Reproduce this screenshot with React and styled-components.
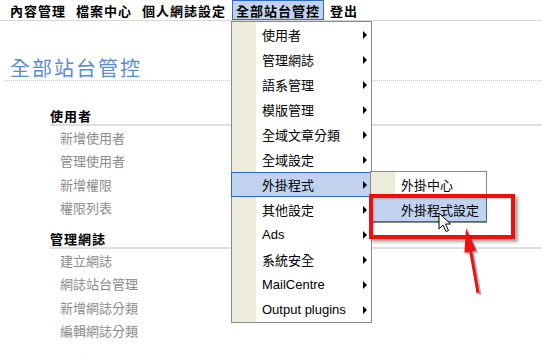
import React from "react";
import styled, { createGlobalStyle } from "styled-components";

const GlobalStyle = createGlobalStyle`
  html, body {
    margin: 0;
    padding: 0;
    background: #fff;
  }
  body {
    font-family: "Liberation Sans", "Noto Sans CJK TC", sans-serif;
    font-size: 13px;
    color: #000;
  }
`;

const Page = styled.div`
  position: relative;
  width: 542px;
  height: 356px;
  overflow: hidden;
  background: #fff;
`;

const TopBar = styled.div`
  display: flex;
  gap: 2px;
  height: 21px;
  padding: 1px 0 0 6px;
  border-bottom: 1px solid #d6d6d6;
  box-sizing: border-box;
`;

const TopItem = styled.div`
  display: flex;
  align-items: center;
  padding: 0 3px;
  font-weight: bold;
  font-size: 13px;
  letter-spacing: 1px;
  border: 1px solid ${(p) => (p.$active ? "#316ac5" : "transparent")};
  background: ${(p) => (p.$active ? "#c1d2ee" : "transparent")};
  margin-top: -1px;
  height: 20px;
  box-sizing: border-box;
  font-family: "Noto Sans CJK TC", sans-serif;
`;

const Content = styled.div`
  padding-top: 35px;
`;

const Title = styled.h1`
  margin: 0 0 27px 5px;
  padding-left: 5px;
  font-size: 20px;
  font-weight: normal;
  letter-spacing: 2px;
  line-height: 24px;
  color: #5b8bd0;
  border-bottom: 1px dotted #c8c8c8;
  font-family: "Noto Sans CJK TC", sans-serif;
`;

const Section = styled.div`
  margin: 0 0 12px 50px;
`;

const Heading = styled.div`
  font-weight: bold;
  letter-spacing: 1px;
  line-height: 16px;
  border-bottom: 2px solid #dedede;
  font-family: "Noto Sans CJK TC", sans-serif;
`;

const Link = styled.div`
  padding-left: 10px;
  line-height: 23.3px;
  color: #8a8a8a;
  font-family: "Noto Sans CJK TC", sans-serif;
`;

const Menu = styled.div`
  position: absolute;
  left: ${(p) => p.$left}px;
  top: ${(p) => p.$top}px;
  width: ${(p) => p.$width}px;
  border: 1px solid #8c8a80;
  background: linear-gradient(to right, #edebd9 24px, #fff 24px);
  box-sizing: border-box;
`;

const MenuItem = styled.div`
  display: flex;
  align-items: center;
  justify-content: space-between;
  height: 25px;
  box-sizing: border-box;
  margin: 0 -1px;
  padding: 0 4px 0 30px;
  border: 1px solid ${(p) => (p.$active ? "#316ac5" : "transparent")};
  background: ${(p) => (p.$active ? "#c1d2ee" : "transparent")};
  font-size: 13px;
  white-space: nowrap;
`;

const Arrow = styled.span`
  width: 0;
  height: 0;
  border-top: 4px solid transparent;
  border-bottom: 4px solid transparent;
  border-left: 4px solid #000;
`;

const Callout = styled.div`
  position: absolute;
  left: 369px;
  top: 194px;
  width: 146px;
  height: 45px;
  box-sizing: border-box;
  border: 4px solid #f20d0d;
  box-shadow: 3px 3px 3px rgba(0, 0, 0, 0.35), inset 1px 1px 2px rgba(0, 0, 0, 0.2);
`;

const Overlay = styled.svg`
  position: absolute;
  left: 0;
  top: 0;
  pointer-events: none;
`;

const mainItems = [
  "使用者",
  "管理網誌",
  "語系管理",
  "模版管理",
  "全域文章分類",
  "全域設定",
  "外掛程式",
  "其他設定",
  "Ads",
  "系統安全",
  "MailCentre",
  "Output plugins",
];

const sections = [
  { title: "使用者", links: ["新增使用者", "管理使用者", "新增權限", "權限列表"] },
  { title: "管理網誌", links: ["建立網誌", "網誌站台管理", "新增網誌分類", "編輯網誌分類"] },
  { title: "系統管理", links: [] },
];

export default function App() {
  return (
    <Page>
      <GlobalStyle />
      <TopBar>
        <TopItem>內容管理</TopItem>
        <TopItem>檔案中心</TopItem>
        <TopItem>個人網誌設定</TopItem>
        <TopItem $active>全部站台管控</TopItem>
        <TopItem>登出</TopItem>
      </TopBar>
      <Content>
        <Title>全部站台管控</Title>
        {sections.map((s) => (
          <Section key={s.title}>
            <Heading>{s.title}</Heading>
            {s.links.map((l) => (
              <Link key={l}>{l}</Link>
            ))}
          </Section>
        ))}
      </Content>

      <Menu $left={231} $top={21} $width={141}>
        {mainItems.map((m) => (
          <MenuItem key={m} $active={m === "外掛程式"}>
            <span>{m}</span>
            <Arrow />
          </MenuItem>
        ))}
      </Menu>

      <Menu $left={370} $top={171} $width={117}>
        <MenuItem>外掛中心</MenuItem>
        <MenuItem $active>外掛程式設定</MenuItem>
      </Menu>

      <Callout />

      <Overlay width="542" height="356" viewBox="0 0 542 356">
        <g transform="translate(2 2)" opacity="0.3">
          <line x1="478" y1="293" x2="470.5" y2="250" stroke="#000" strokeWidth="3" />
          <polygon points="466,228 476.2,250.5 464.4,252.7" fill="#000" />
        </g>
        <line x1="478" y1="293" x2="470.5" y2="250" stroke="#ee1111" strokeWidth="3" />
        <polygon points="466,228 476.2,250.5 464.4,252.7" fill="#ee1111" />
        <path
          d="M439 213 L439 229 L443 225 L446 231.5 L448.5 230.5 L445.5 224 L450.5 224 Z"
          fill="#fff"
          stroke="#000"
          strokeWidth="1"
          strokeLinejoin="miter"
        />
      </Overlay>
    </Page>
  );
}
